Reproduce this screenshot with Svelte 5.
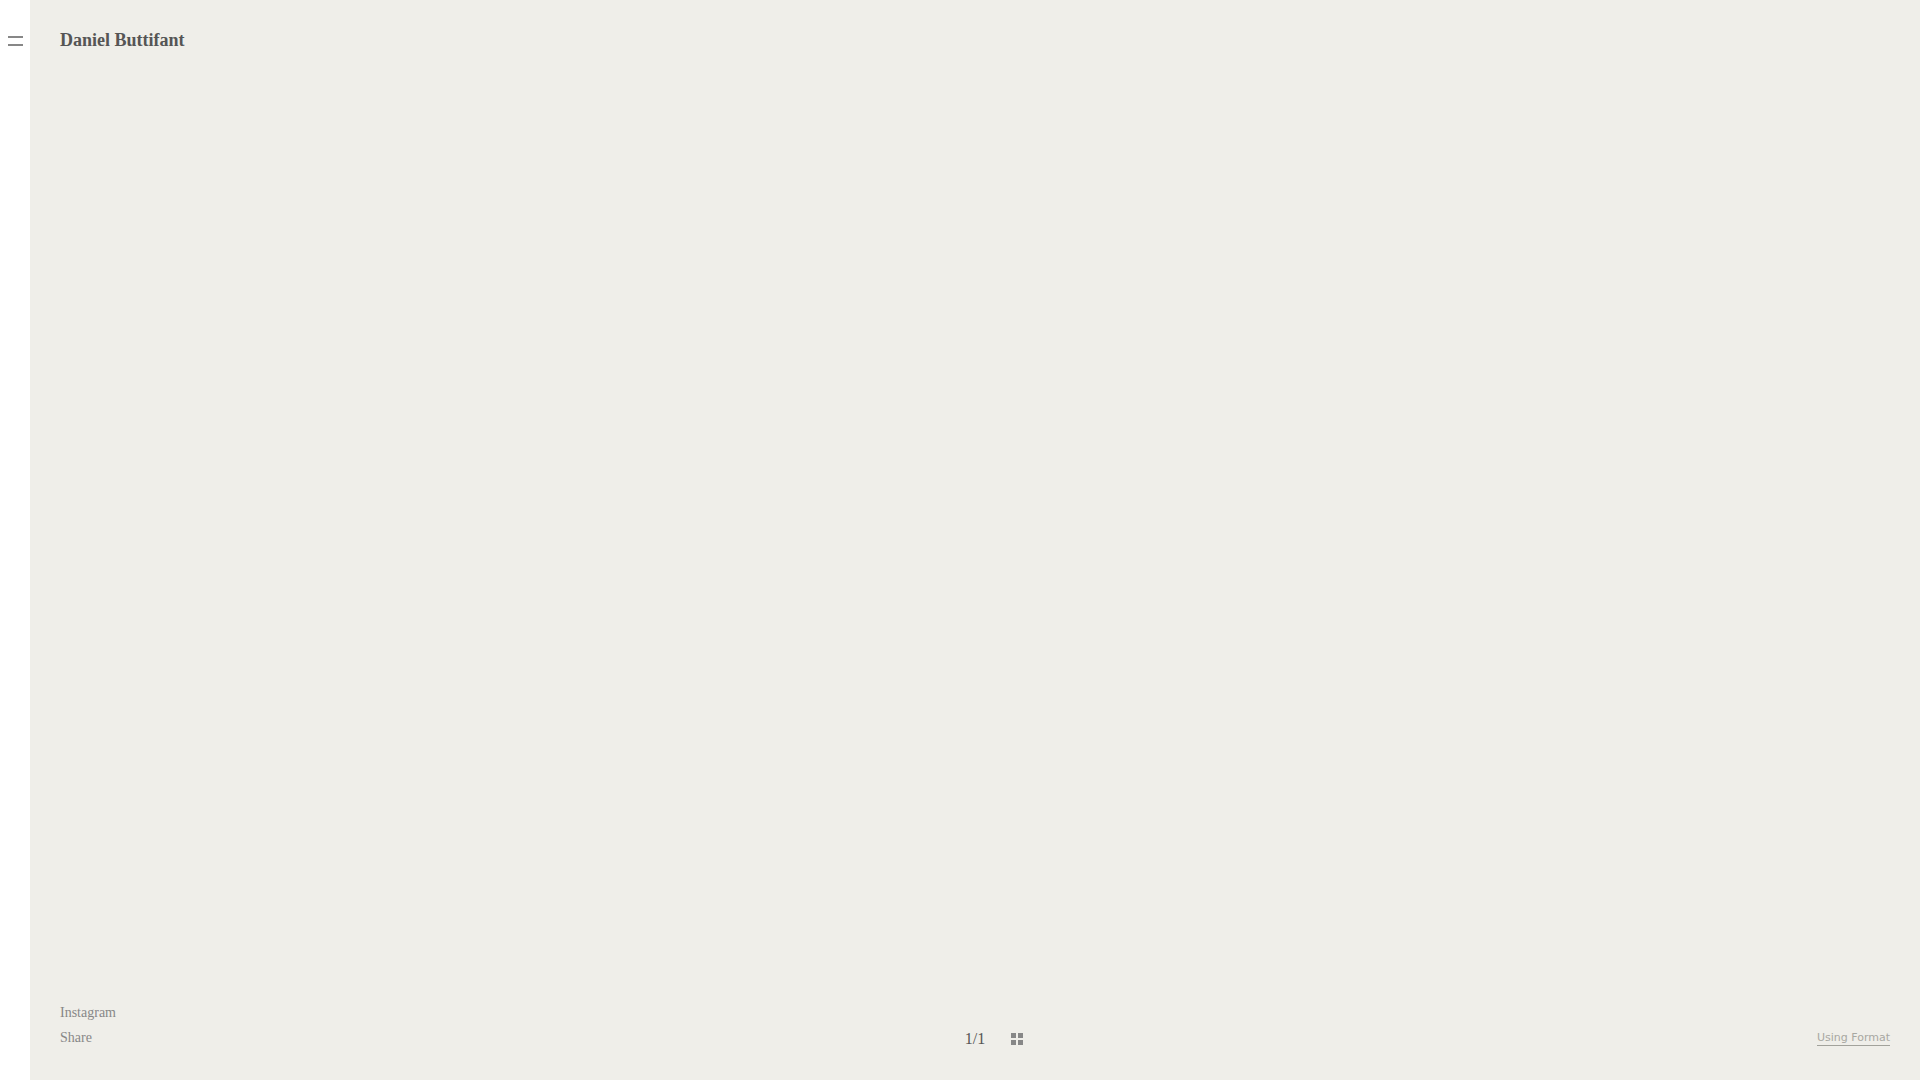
<script lang="ts">
let current = $state(1);
let total = $state(1);

const links = [
  { label: "Instagram", href: "#instagram" },
  { label: "Share", href: "#share" },
];
</script>

<div class="page">
  <aside class="sidebar">
    <button class="menu" type="button" aria-label="Menu">
      <span class="line"></span>
      <span class="line"></span>
    </button>
  </aside>

  <main class="content">
    <header>
      <h1><a href="#home">Daniel Buttifant</a></h1>
    </header>

    <footer>
      <nav class="links">
        {#each links as link}
          <a href={link.href}>{link.label}</a>
        {/each}
      </nav>

      <div class="pager">
        <span class="count">{current}/{total}</span>
        <button class="grid" type="button" aria-label="Show thumbnails">
          <svg width="12" height="12" viewBox="0 0 12 12" fill="#878787" shape-rendering="crispEdges">
            <rect width="5" height="5" />
            <rect x="7" width="5" height="5" />
            <rect y="7" width="5" height="5" />
            <rect x="7" y="7" width="5" height="5" />
          </svg>
        </button>
      </div>

      <div class="credit">
        <a href="#format">Using Format</a>
      </div>
    </footer>
  </main>
</div>

<style>
:global(body) {
  margin: 0;
  background: #efeee9;
}

.page {
  display: flex;
  min-height: 100vh;
  font-family: "Liberation Serif", "Times New Roman", serif;
}

a {
  color: inherit;
  text-decoration: none;
}

button {
  padding: 0;
  border: none;
  background: none;
  cursor: pointer;
}

.sidebar {
  flex: none;
  width: 30px;
  box-sizing: border-box;
  padding: 36px 7px 0 8px;
  background: #fff;
}

.menu {
  display: flex;
  flex-direction: column;
  gap: 6px;
  width: 100%;
}

.line {
  width: 100%;
  height: 2px;
  background: #878787;
}

.content {
  flex: 1;
  display: flex;
  flex-direction: column;
  justify-content: space-between;
  padding: 30px;
}

h1 {
  margin: 0;
  font-size: 18px;
  line-height: 20px;
  font-weight: bold;
  color: #555;
}

footer {
  display: grid;
  grid-template-columns: 1fr auto 1fr;
  align-items: end;
}

.links {
  display: flex;
  flex-direction: column;
  align-items: flex-start;
  font-size: 14px;
  line-height: 25px;
  color: #878787;
}

/* left padding balances the grid button so the count stays centred */
.pager {
  display: flex;
  align-items: center;
  gap: 26px;
  padding: 0 0 1px 38px;
}

.count {
  font-size: 16px;
  line-height: 20px;
  color: #555;
}

.grid {
  display: flex;
}

.credit {
  display: flex;
  justify-content: flex-end;
  padding-bottom: 4px;
}

.credit a {
  border-bottom: 1px solid #a2a29b;
  font-family: "DejaVu Sans", sans-serif;
  font-size: 11px;
  line-height: 14px;
  color: #a8a8a2;
}
</style>
